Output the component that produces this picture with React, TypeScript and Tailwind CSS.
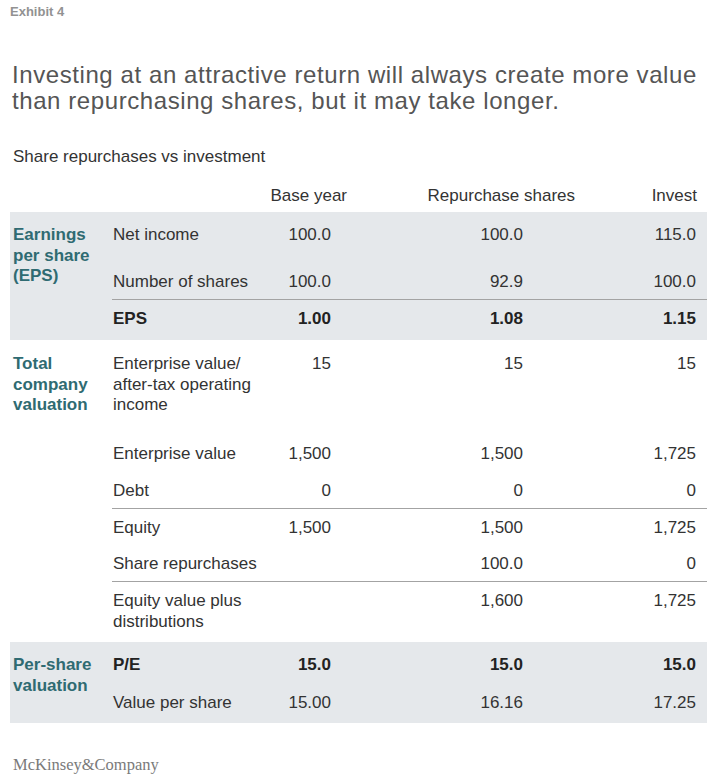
import React from 'react';

type Row = {
  label: React.ReactNode;
  base?: string;
  repurchase?: string;
  invest?: string;
  bold?: boolean;
  rowClass: string;
  border?: boolean;
};

const Section = ({
  title,
  rows,
  shaded,
  className,
}: {
  title: React.ReactNode;
  rows: Row[];
  shaded?: boolean;
  className: string;
}) => (
  <div className={`flex ${shaded ? 'bg-[#e5e8eb]' : ''} ${className}`}>
    <div className="w-[102px] shrink-0 pl-[3px] font-bold text-[#2f6b72] leading-[20.5px]">
      {title}
    </div>
    <div className="flex-1">
      {rows.map((r, i) => (
        <div
          key={i}
          className={`grid grid-cols-[170px_49px_192px_1fr] pr-[11px] ${r.rowClass} ${
            r.border ? 'border-b border-[#a3a3a3]' : ''
          } ${r.bold ? 'font-bold text-[#222]' : 'text-[#333]'}`}
        >
          <div className="pl-[1px]">{r.label}</div>
          <div className="text-right">{r.base}</div>
          <div className="text-right">{r.repurchase}</div>
          <div className="text-right">{r.invest}</div>
        </div>
      ))}
    </div>
  </div>
);

export default function App() {
  return (
    <div className="w-[713px] h-[780px] bg-white font-['Liberation_Sans',Arial,sans-serif] text-[17px] leading-[20.5px] overflow-hidden">
      <div className="pl-[10px] pt-[4px] text-[13px] leading-[16px] font-bold text-[#929292]">
        Exhibit 4
      </div>

      <h1 className="mt-[42px] pl-[12px] text-[24px] leading-[26px] tracking-[0.58px] text-[#555]">
        Investing at an attractive return will always create more value
        <br />
        than repurchasing shares, but it may take longer.
      </h1>

      <div className="mt-[33px] pl-[13px] text-[#333] leading-[20px]">
        Share repurchases vs investment
      </div>

      <div className="mt-[19px] mb-[6px] flex h-[20px] items-center text-[#333]">
        <div className="w-[347px] text-right">Base year</div>
        <div className="w-[228px] text-right">Repurchase shares</div>
        <div className="w-[122px] text-right">Invest</div>
      </div>

      <div className="px-[10px] pr-[6px]">
        <Section
          shaded
          className="h-[128px] pt-[13px]"
          title={
            <>
              Earnings
              <br />
              per share
              <br />
              (EPS)
            </>
          }
          rows={[
            { label: 'Net income', base: '100.0', repurchase: '100.0', invest: '115.0', rowClass: 'h-[41px]' },
            {
              label: 'Number of shares',
              base: '100.0',
              repurchase: '92.9',
              invest: '100.0',
              rowClass: 'h-[34px] items-center',
              border: true,
            },
            { label: 'EPS', base: '1.00', repurchase: '1.08', invest: '1.15', bold: true, rowClass: 'h-[38px] items-center' },
          ]}
        />

        <Section
          className="h-[302px] pt-[14px]"
          title={
            <>
              Total
              <br />
              company
              <br />
              valuation
            </>
          }
          rows={[
            {
              label: (
                <>
                  Enterprise value/
                  <br />
                  after-tax operating
                  <br />
                  income
                </>
              ),
              base: '15',
              repurchase: '15',
              invest: '15',
              rowClass: 'h-[81px]',
            },
            { label: 'Enterprise value', base: '1,500', repurchase: '1,500', invest: '1,725', rowClass: 'h-[39px] items-center' },
            {
              label: 'Debt',
              base: '0',
              repurchase: '0',
              invest: '0',
              rowClass: 'h-[35px] items-center',
              border: true,
            },
            { label: 'Equity', base: '1,500', repurchase: '1,500', invest: '1,725', rowClass: 'h-[38px] items-center' },
            {
              label: 'Share repurchases',
              repurchase: '100.0',
              invest: '0',
              rowClass: 'h-[35px] items-center',
              border: true,
            },
            {
              label: (
                <>
                  Equity value plus
                  <br />
                  distributions
                </>
              ),
              repurchase: '1,600',
              invest: '1,725',
              rowClass: 'pt-[9px]',
            },
          ]}
        />

        <Section
          shaded
          className="h-[81px] pt-[13px]"
          title={
            <>
              Per-share
              <br />
              valuation
            </>
          }
          rows={[
            { label: 'P/E', base: '15.0', repurchase: '15.0', invest: '15.0', bold: true, rowClass: 'h-[28px]' },
            {
              label: 'Value per share',
              base: '15.00',
              repurchase: '16.16',
              invest: '17.25',
              rowClass: 'h-[40px] items-center',
            },
          ]}
        />
      </div>

      <div className="mt-[32px] pl-[13px] font-['Liberation_Serif','Times_New_Roman',serif] text-[16.5px] leading-[20px] text-[#7a7a7a]">
        McKinsey&amp;Company
      </div>
    </div>
  );
}
